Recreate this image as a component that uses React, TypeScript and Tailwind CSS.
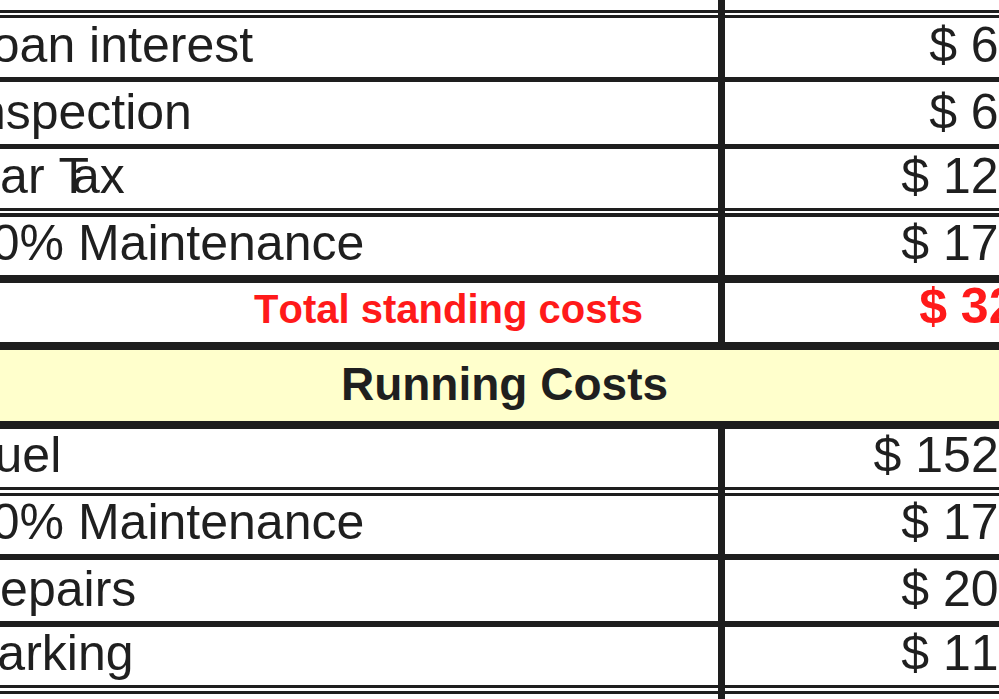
const INK = "bg-[#1e1e1e]";

type Item = { label: React.ReactNode; amount: string };

const standing: Item[] = [
  { label: "Loan interest", amount: "$ 65.00" },
  { label: "Inspection", amount: "$ 65.00" },
  {
    label: (
      <>
        Car <span className="-mr-[17px]">T</span>ax
      </>
    ),
    amount: "$ 120.00",
  },
  { label: "10% Maintenance", amount: "$ 175.00" },
];

const running: Item[] = [
  { label: "Fuel", amount: "$ 1520.00" },
  { label: "10% Maintenance", amount: "$ 175.00" },
  { label: "Repairs", amount: "$ 200.00" },
  { label: "Parking", amount: "$ 110.00" },
];

// label column | divider | amount column
function Cells({
  h,
  left,
  right,
}: {
  h: string;
  left?: React.ReactNode;
  right?: React.ReactNode;
}) {
  return (
    <div className={`grid grid-cols-[809px_7px_1fr] ${h}`}>
      <div className="flex items-end overflow-hidden bg-white">{left}</div>
      <div className={INK} />
      <div className="flex items-end justify-end overflow-hidden bg-white">
        {right}
      </div>
    </div>
  );
}

function Rule({ h }: { h: string }) {
  return <div className={`${h} ${INK}`} />;
}

function DoubleRule({ top, gap, bottom }: { top: string; gap: string; bottom: string }) {
  return (
    <>
      <Rule h={top} />
      <Cells h={gap} />
      <Rule h={bottom} />
    </>
  );
}

function Row({ item, h }: { item: Item; h: string }) {
  return (
    <Cells
      h={h}
      left={
        <span className="whitespace-nowrap pb-[3px] pl-[55px] text-[50px] leading-[normal]">
          {item.label}
        </span>
      }
      right={
        <span className="whitespace-nowrap pb-[3px] pr-[4px] text-[50px] leading-[normal]">
          {item.amount}
        </span>
      }
    />
  );
}

export default function App() {
  return (
    <div className="h-[699px] w-[999px] overflow-hidden bg-white font-['Liberation_Sans',Arial,sans-serif] text-[#1f1f1f] [font-kerning:none]">
      <div className="-ml-[91px] w-[1191px]">
        <Cells h="h-[10px]" />
        <DoubleRule top="h-[3px]" gap="h-[2px]" bottom="h-[3px]" />

        <Row item={standing[0]} h="h-[59px]" />
        <Rule h="h-[5px]" />
        <Row item={standing[1]} h="h-[62px]" />
        <Rule h="h-[5px]" />
        <Row item={standing[2]} h="h-[59px]" />
        <DoubleRule top="h-[3px]" gap="h-[2px]" bottom="h-[4px]" />
        <Row item={standing[3]} h="h-[58px]" />
        <Rule h="h-[8px]" />

        <Cells
          h="h-[59px]"
          left={
            <span className="w-full whitespace-nowrap pb-[10px] pr-[75px] text-right text-[40px] leading-[normal] font-bold text-[#ff1a1a]">
              Total standing costs
            </span>
          }
          right={
            <span className="whitespace-nowrap pb-[7px] pr-[14px] text-[50px] leading-[normal] font-bold text-[#ff1a1a]">
              $ 32.00
            </span>
          }
        />
        <Rule h="h-[8px]" />

        <div className="flex h-[71px] items-end justify-center bg-[#ffffcc] pb-[10px]">
          <span className="text-[46px] leading-[normal] font-bold">Running Costs</span>
        </div>
        <Rule h="h-[8px]" />

        <Row item={running[0]} h="h-[58px]" />
        <DoubleRule top="h-[3px]" gap="h-[3px]" bottom="h-[3px]" />
        <Row item={running[1]} h="h-[58px]" />
        <Rule h="h-[6px]" />
        <Row item={running[2]} h="h-[61px]" />
        <Rule h="h-[6px]" />
        <Row item={running[3]} h="h-[58px]" />
        <DoubleRule top="h-[3px]" gap="h-[3px]" bottom="h-[3px]" />
        <Cells h="h-[20px]" />
      </div>
    </div>
  );
}
